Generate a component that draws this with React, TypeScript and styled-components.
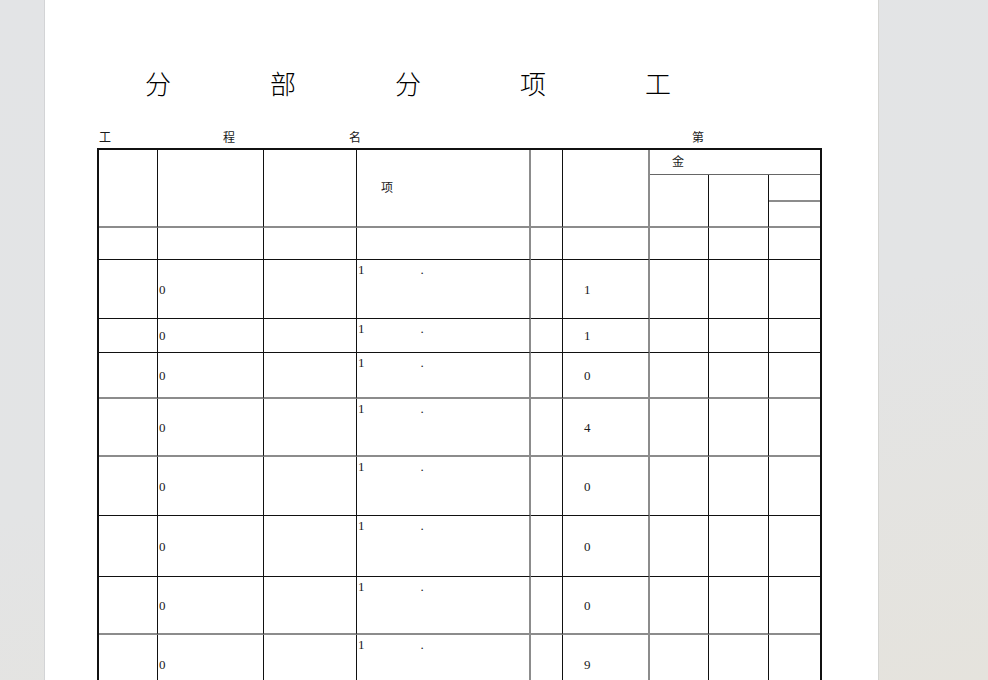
import React from 'react';
import styled, { createGlobalStyle } from 'styled-components';

type Line = 'dark' | 'gray' | 'thin' | 'none';

const lineCss = (l: Line) =>
  l === 'dark'
    ? '1px solid #111'
    : l === 'gray'
    ? '2px solid #8c8c8c'
    : l === 'thin'
    ? '1px solid #666'
    : 'none';

const Global = createGlobalStyle`
  html, body { margin: 0; padding: 0; }
  body {
    background: linear-gradient(165deg, #e3e4e6 0%, #e3e4e5 55%, #e5e3dd 100%);
    font-family: "Liberation Serif", "Noto Sans CJK SC", serif;
    color: #1a1a1a;
    overflow: hidden;
  }
`;

const Viewport = styled.div`
  height: 680px;
  overflow: hidden;
  display: flex;
`;

const Page = styled.div`
  margin-left: 45px;
  width: 833px;
  height: 680px;
  flex: none;
  background: #fff;
  box-shadow: -1px 0 0 #d3d4d6, 1px 0 0 #d5d5d2;
  box-sizing: border-box;
  padding: 73px 0 0 52px;
  display: flex;
  flex-direction: column;
`;

const Title = styled.h1`
  margin: 0;
  padding-left: 48px;
  display: flex;
  gap: 99px;
  font-size: 26px;
  line-height: 26px;
  font-weight: 300;
  color: #000;
`;

const InfoRow = styled.div`
  margin-top: 33px;
  display: flex;
  height: 13px;
  font-size: 12px;
  line-height: 13px;
`;

const InfoLabel = styled.span<{ $offset: number }>`
  margin-left: ${p => p.$offset}px;
`;

const Sheet = styled.div`
  margin-top: 3px;
  display: grid;
  width: max-content;
  grid-template-columns: 59px 106px 93px 174px 32px 87px 59px 60px 51px;
  grid-template-rows: 25px 27px 26px 32px 59px 34px 46px 58px 59px 61px 58px 59px 59px 59px;
  border: 2px solid #111;
  border-bottom: none;
`;

const Cell = styled.div<{
  $right: Line;
  $bottom: Line;
  $rowSpan?: number;
  $colSpan?: number;
  $pad?: number;
}>`
  box-sizing: border-box;
  border-right: ${p => lineCss(p.$right)};
  border-bottom: ${p => lineCss(p.$bottom)};
  grid-row: span ${p => p.$rowSpan ?? 1};
  grid-column: span ${p => p.$colSpan ?? 1};
  padding-left: ${p => p.$pad ?? 0}px;
  display: flex;
  align-items: center;
  font-size: 13px;
  line-height: 13px;
  min-width: 0;
`;

const HeadCell = styled(Cell)`
  font-size: 12px;
  line-height: 12px;
`;

const ItemCell = styled(Cell)`
  align-items: flex-start;
  padding-top: 3px;
`;

const Dot = styled.span`
  margin-left: 56px;
`;

const colRight: Line[] = ['dark', 'dark', 'dark', 'gray', 'dark', 'gray', 'dark', 'dark', 'none'];
const rowBottom: Line[] = ['dark', 'dark', 'dark', 'gray', 'gray', 'dark', 'dark', 'gray', 'dark', 'dark', 'dark'];
const amounts = ['1', '1', '0', '4', '0', '0', '0', '9', '', ''];

export default function App() {
  return (
    <>
      <Global />
      <Viewport>
        <Page>
          <Title>
            <span>分</span>
            <span>部</span>
            <span>分</span>
            <span>项</span>
            <span>工</span>
          </Title>
          <InfoRow>
            <InfoLabel $offset={2}>工</InfoLabel>
            <InfoLabel $offset={112}>程</InfoLabel>
            <InfoLabel $offset={114}>名</InfoLabel>
            <InfoLabel $offset={331}>第</InfoLabel>
          </InfoRow>
          <Sheet>
            {colRight.slice(0, 6).map((r, i) => (
              <HeadCell key={`h${i}`} $right={r} $bottom="gray" $rowSpan={3} $pad={i === 3 ? 24 : 0}>
                {i === 3 ? '项' : ''}
              </HeadCell>
            ))}
            <HeadCell $right="none" $bottom="thin" $colSpan={3} $pad={22}>金</HeadCell>
            <HeadCell $right="dark" $bottom="gray" $rowSpan={2} />
            <HeadCell $right="dark" $bottom="gray" $rowSpan={2} />
            <HeadCell $right="none" $bottom="gray" />
            <HeadCell $right="none" $bottom="gray" />
            {rowBottom.map((b, r) =>
              colRight.map((c, ci) => {
                const key = `r${r}c${ci}`;
                const hasData = r > 0 && r <= 8;
                if (ci === 3) {
                  return (
                    <ItemCell key={key} $right={c} $bottom={b} $pad={1}>
                      {hasData ? (
                        <>
                          <span>1</span>
                          <Dot>.</Dot>
                        </>
                      ) : null}
                    </ItemCell>
                  );
                }
                let text = '';
                let pad = 0;
                if (hasData && ci === 1) {
                  text = '0';
                  pad = 1;
                }
                if (hasData && ci === 5) {
                  text = amounts[r - 1];
                  pad = 21;
                }
                return (
                  <Cell key={key} $right={c} $bottom={b} $pad={pad}>
                    {text}
                  </Cell>
                );
              })
            )}
          </Sheet>
        </Page>
      </Viewport>
    </>
  );
}
